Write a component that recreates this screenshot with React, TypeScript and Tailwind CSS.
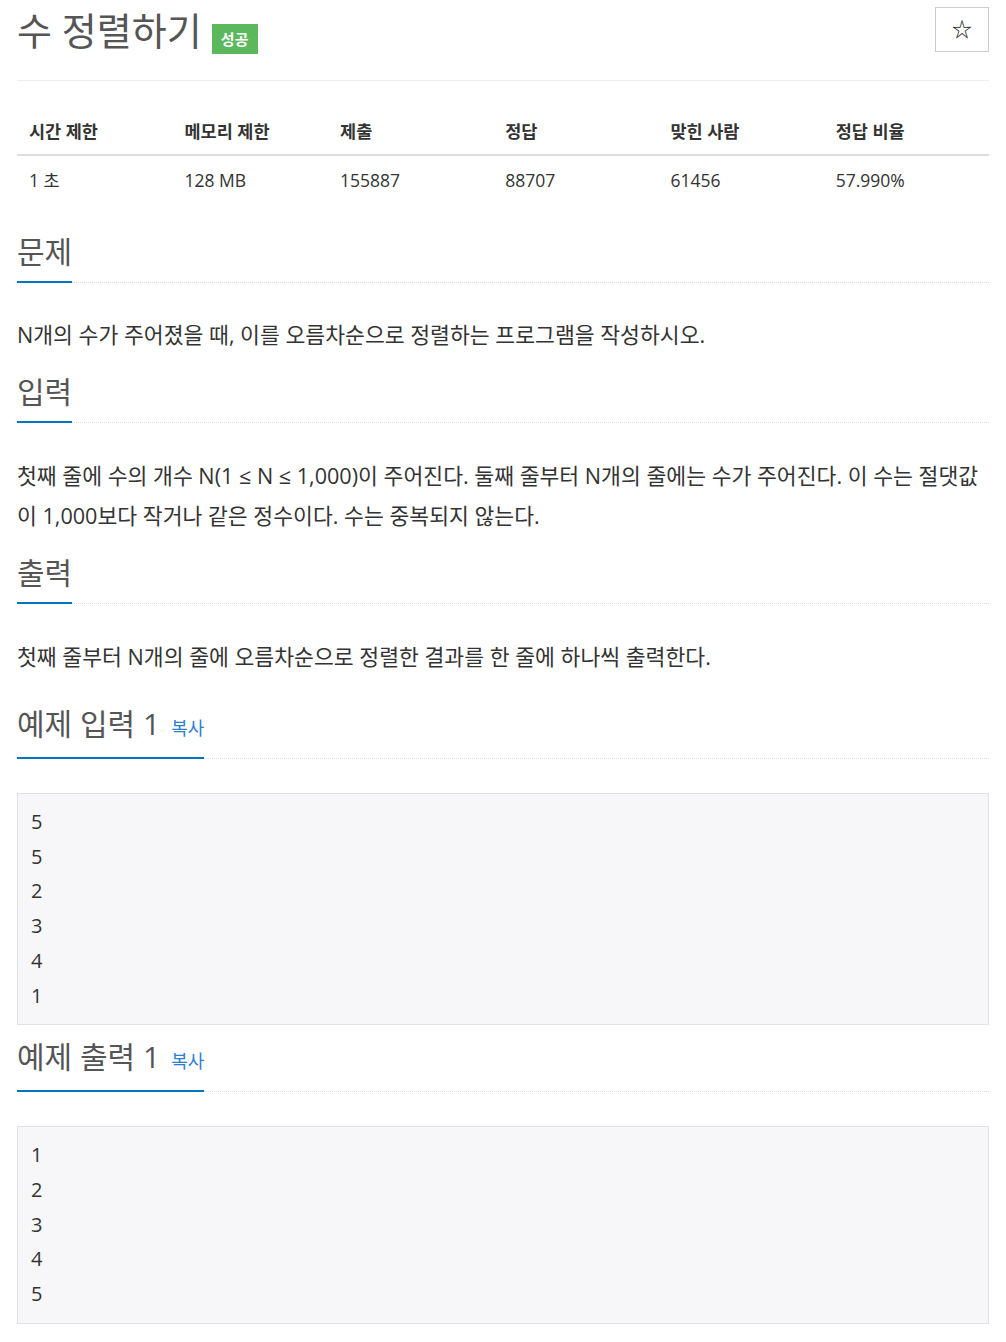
const font = { fontFamily: '"Open Sans", "Noto Sans CJK KR", sans-serif' };

const stats = [
  { label: '시간 제한', value: '1 초', w: 'w-[16%]' },
  { label: '메모리 제한', value: '128 MB', w: 'w-[16%]' },
  { label: '제출', value: '155887', w: 'w-[17%]' },
  { label: '정답', value: '88707', w: 'w-[17%]' },
  { label: '맞힌 사람', value: '61456', w: 'w-[17%]' },
  { label: '정답 비율', value: '57.990%', w: 'w-[17%]' },
];

function Headline({ title, copy }: { title: string; copy?: boolean }) {
  return (
    <div className="border-b border-dotted border-[#ddd]">
      <h2 className="-mb-px inline-flex items-baseline border-b-2 border-[#0076c0] pb-[12px] text-[30px] leading-[34px] font-normal text-[#555]">
        {title}
        {copy && <span className="ml-[11px] text-[18px] leading-[34px] text-[#2b7ed1]">복사</span>}
      </h2>
    </div>
  );
}

function Sample({ lines }: { lines: string[] }) {
  return (
    <pre
      className="mt-[34px] border border-[#e1e1e8] bg-[#f7f7f9] px-[13px] py-[11px] text-[20px] leading-[34.7px] text-[#333]"
      style={font}
    >
      {lines.join('\n')}
    </pre>
  );
}

export default function App() {
  return (
    <div className="min-h-[1342px] bg-white px-[17px] text-[#333]" style={font}>
      {/* title */}
      <div className="flex h-[81px] items-start justify-between border-b border-[#eee]">
        <div className="flex items-start">
          <h1 className="mt-[9px] text-[38px] leading-[42px] font-normal text-[#555]">수 정렬하기</h1>
          <span className="mt-[24px] ml-[10px] flex h-[30px] w-[46px] items-center justify-center bg-[#5cb85c] text-[15px] font-bold text-white">
            성공
          </span>
        </div>
        <button className="mt-[7px] flex h-[45px] w-[54px] items-center justify-center border border-[#ccc] bg-white text-[20px] text-[#222]">
          ☆
        </button>
      </div>

      {/* stats */}
      <table className="mt-[27px] w-full table-fixed border-collapse text-[17.5px]">
        <thead>
          <tr className="border-b-2 border-[#ddd]">
            {stats.map((s) => (
              <th key={s.label} className={`${s.w} h-[47px] px-[12px] text-left align-middle font-bold text-[#333]`}>
                {s.label}
              </th>
            ))}
          </tr>
        </thead>
        <tbody>
          <tr>
            {stats.map((s) => (
              <td key={s.label} className="h-[50px] px-[12px] align-middle">
                {s.value}
              </td>
            ))}
          </tr>
        </tbody>
      </table>

      {/* 문제 */}
      <section className="mt-[30px]">
        <Headline title="문제" />
        <p className="mt-[32px] text-[21.6px] leading-[40px] break-all">N개의 수가 주어졌을 때, 이를 오름차순으로 정렬하는 프로그램을 작성하시오.</p>
      </section>

      {/* 입력 */}
      <section className="mt-[20px]">
        <Headline title="입력" />
        <p className="mt-[33px] text-[21.6px] leading-[40px] break-all">
          첫째 줄에 수의 개수 N(1 ≤ N ≤ 1,000)이 주어진다. 둘째 줄부터 N개의 줄에는 수가 주어진다. 이 수는 절댓값이 1,000보다 작거나 같은 정수이다. 수는 중복되지 않는다.
        </p>
      </section>

      {/* 출력 */}
      <section className="mt-[20px]">
        <Headline title="출력" />
        <p className="mt-[33px] text-[21.6px] leading-[40px] break-all">첫째 줄부터 N개의 줄에 오름차순으로 정렬한 결과를 한 줄에 하나씩 출력한다.</p>
      </section>

      {/* 예제 */}
      <section className="mt-[30px]">
        <Headline title="예제 입력 1" copy />
        <Sample lines={['5', '5', '2', '3', '4', '1']} />
      </section>

      <section className="mt-[15px]">
        <Headline title="예제 출력 1" copy />
        <Sample lines={['1', '2', '3', '4', '5']} />
      </section>
    </div>
  );
}
